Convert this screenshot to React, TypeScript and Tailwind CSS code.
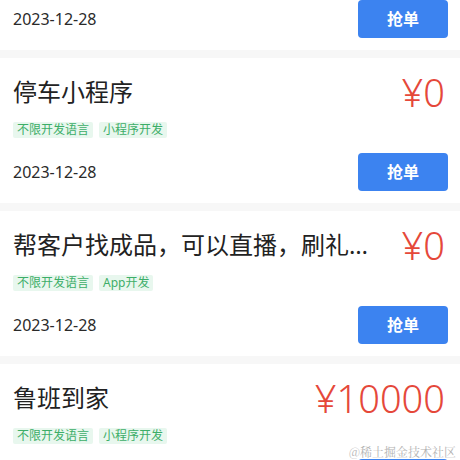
import React from "react";

type Item = { title: string; price: string; tags: string[]; date: string };

const items: Item[] = [
  { title: "小程序开发", price: "¥0", tags: ["不限开发语言", "小程序开发"], date: "2023-12-28" },
  { title: "停车小程序", price: "¥0", tags: ["不限开发语言", "小程序开发"], date: "2023-12-28" },
  { title: "帮客户找成品，可以直播，刷礼物，连麦等功能", price: "¥0", tags: ["不限开发语言", "App开发"], date: "2023-12-28" },
  { title: "鲁班到家", price: "¥10000", tags: ["不限开发语言", "小程序开发"], date: "2023-12-28" },
];

function Card({ item, first }: { item: Item; first?: boolean }) {
  return (
    <div className={`bg-white px-[13px] pt-[14px] pb-[12px] ${first ? "mt-[-95px]" : ""}`}>
      <div className="flex h-[40px] items-center">
        <div className="min-w-0 flex-1 truncate pr-[14px] text-[24px] leading-[40px] text-[#222]">
          {item.title}
        </div>
        <div className="shrink-0 pr-[2px] text-[38px] font-light leading-[40px] text-[#e5483a]">{item.price}</div>
      </div>
      <div className="mt-[10px] flex gap-[6px]">
        {item.tags.map((t) => (
          <span
            key={t}
            className="h-[16px] rounded-[2px] bg-[#e8f7ee] px-[4px] text-[12px] leading-[16px] text-[#3dae68]"
          >
            {t}
          </span>
        ))}
      </div>
      <div className="mt-[15px] flex items-center justify-between">
        <span className="text-[16px] text-[#2a2a2a]">{item.date}</span>
        <button className="mr-[-1px] h-[38px] w-[90px] rounded-[4px] bg-[#3c83f0] text-[16px] font-bold text-white">
          抢单
        </button>
      </div>
    </div>
  );
}

export default function App() {
  return (
    <div
      className="relative h-[460px] w-[460px] overflow-hidden bg-[#f7f7f7]"
      style={{ fontFamily: '"Noto Sans", "Noto Sans CJK SC", sans-serif' }}
    >
      <div className="flex flex-col gap-[8px]">
        {items.map((it, i) => (
          <Card key={i} item={it} first={i === 0} />
        ))}
      </div>
      <div
        className="absolute bottom-[0px] right-[4px] text-[12px] leading-[16px] text-[#b4b4b4]"
        style={{ fontFamily: '"Noto Serif CJK SC", "Noto Sans CJK SC", serif' }}
      >
        @稀土掘金技术社区
      </div>
    </div>
  );
}
